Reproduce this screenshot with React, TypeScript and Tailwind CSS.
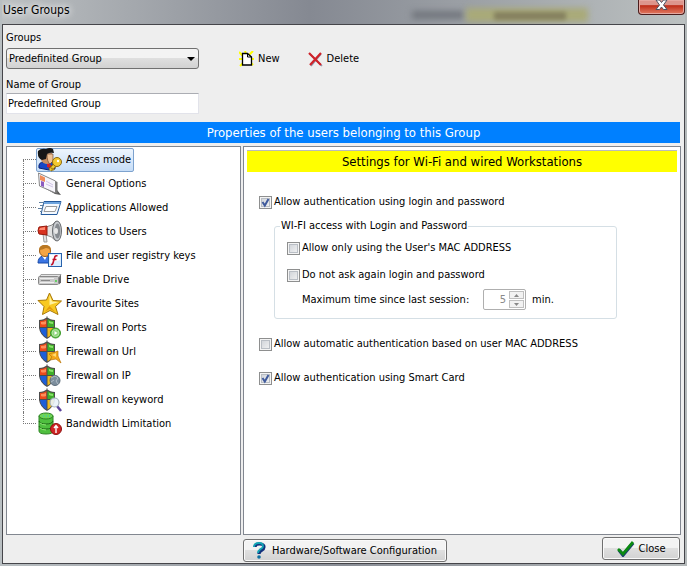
import React, { useState } from "react";

const UserIcon = () => (
  <svg width="26" height="24" viewBox="0 0 26 24">
    <path d="M2 20q-1-6 5-6h6q5 1 5 7l-6 1z" fill="#1747c8" stroke="#0b2270" />
    <path d="M10 14l4 3 2 4-6-2z" fill="#d3202a" />
    <path d="M3 6q0 9 6 10 5 0 6-4V5z" fill="#c98f63" />
    <path d="M10 6h6v7l-3 3q-3-2-3-10z" fill="#f0c294" stroke="#5e3b20" strokeWidth=".6" />
    <path d="M1 3q3-3 8-2 4-2 7 0l1 4q-4-1-7 1l-1 5-4 1Q0 10 1 3z" fill="#171717" />
    <path d="M19 16l-6 6" stroke="#7b5c08" strokeWidth="4.5" />
    <path d="M19 16l-6 6" stroke="#f0c930" strokeWidth="2.5" />
    <circle cx="20" cy="14" r="4.5" fill="#f3c92e" stroke="#8c6a10" />
    <circle cx="21" cy="13" r="1.2" fill="#fff" />
    <path d="M14 20l3 2" stroke="#b48b13" strokeWidth="2" />
  </svg>
);

const OptionsIcon = () => (
  <svg width="26" height="24" viewBox="0 0 26 24">
    <path d="M4 14l14 8 6 1-4-5z" fill="#555" />
    <path d="M1.500 1l17 8v12l-16-7z" fill="#f7f5fb" stroke="#888" />
    <path d="M18.500 9l2 1v12l-2-1z" fill="#777" />
    <path d="M3 3l5 2.500V10L3 8z" fill="#f18b5a" />
    <path d="M4 9l3 1v5l-3-1z" fill="#8c5bc0" />
    <path d="M9 9l7 4M9 12l7 3" stroke="#cfc2e6" />
  </svg>
);

const ApplicationIcon = () => (
  <svg width="26" height="24" viewBox="0 0 26 24">
    <path d="M7 5.500h17l-4 13H4z" fill="#f4f9ff" stroke="#245a9c" />
    <path d="M7.500 6h16l-.5 2H6.500z" fill="#6fa5de" />
    <path d="M9 10.500h11l-2 5H7z" fill="#fff" stroke="#9a9a9a" />
    <path d="M2 6.500h5M3 9.500h4M1 12.500h5M3 15.500h2" stroke="#5f7f9f" />
  </svg>
);

const MegaphoneIcon = () => (
  <svg width="26" height="24" viewBox="0 0 26 24">
    <path d="M6 14h3l1 8H7z" fill="#e4e4e4" stroke="#9a9a9a" />
    <path d="M9 7Q16 6 19 1v20q-4-5-10-6z" fill="#e2e2e2" stroke="#888" />
    <path d="M2 7l8-1v9l-8-1q-2-3 0-7z" fill="#d8321f" stroke="#94190c" />
    <path d="M3 8l5-1v3H2z" fill="#ff8b72" />
    <ellipse cx="20" cy="11" rx="4.500" ry="10" fill="#c9ccd0" stroke="#66696d" />
    <ellipse cx="20.500" cy="11" rx="2.800" ry="7.500" fill="#878b90" />
    <ellipse cx="19" cy="11" rx="2" ry="3" fill="#e7e7e7" />
  </svg>
);

const RegistryIcon = () => (
  <svg width="26" height="24" viewBox="0 0 26 24">
    <path d="M1 19q0-6 5-7h5q4 2 4 7z" fill="#3a75e4" stroke="#1748a6" />
    <path d="M5 12l3 4 2-4z" fill="#fff" />
    <circle cx="8" cy="7" r="5.500" fill="#f3a545" stroke="#9a5b15" />
    <path d="M2 6q0-5 6-5 6 0 6 5-3-2-5-2-4 2-7 2z" fill="#b97722" />
    <rect x="11.500" y="9.500" width="13" height="13" fill="#dbeeff" stroke="#2862ac" />
    <path d="M13 11h10v5l-10 3z" fill="#fff" />
    <path d="M20.500 12q-2.500-1-3 2l-1.500 5q-.5 2-2 1.500M15.500 15.500h4" fill="none" stroke="#c3122a" strokeWidth="1.600" />
  </svg>
);

const DriveIcon = () => (
  <svg width="26" height="24" viewBox="0 0 26 24">
    <path d="M4 6.500h20l-2 3H2z" fill="#e4e4e4" stroke="#a0a0a0" />
    <path d="M22 9.500l2-3v8l-2 2z" fill="#666" />
    <rect x="1.500" y="8.500" width="20" height="8" rx="1" fill="#c9c9c9" stroke="#888" />
    <path d="M3 10.500h14M3 14.500h14" stroke="#eee" />
    <path d="M4 12.500h9" stroke="#888" />
    <circle cx="19" cy="13" r="1" fill="#43d143" />
  </svg>
);

const StarIcon = () => (
  <svg width="26" height="24" viewBox="0 0 26 24">
    <path d="M12.500 1l3.500 7.500 8.500.5-6 5.500 2.500 8-8-4-7.500 4 1.500-8-6-6 8.500-.5z" fill="#f8c922" stroke="#a97808" strokeLinejoin="round" />
    <path d="M12.500 3l2.500 6.500 6.500.5-9 3z" fill="#fff1a0" />
    <path d="M12.500 14l6 6-6-3-5 3z" fill="#e59b0d" />
  </svg>
);

const ShieldIcon: React.FC<{ children: React.ReactNode }> = ({ children }) => (
  <svg width="26" height="24" viewBox="0 0 26 24">
    <path d="M2 4q5 0 8-3 3 3 8 3v8q-1 7-8 11Q3 19 2 12z" fill="#4c4c4c" />
    <path d="M3 5q4 0 6.500-2v8H3z" fill="#ec4a1c" />
    <path d="M10.500 3Q13 5 17 5v6h-6.500z" fill="#3fae2a" />
    <path d="M3 12h6.500v9.500Q3.500 18 3 12z" fill="#1e5fd8" />
    <path d="M10.500 12H17q-.5 6-6.500 9.500z" fill="#f0b91c" />
    <path d="M4 6q3 0 5-1v3q-3 1-5 0z" fill="#ff8f5a" />
    <path d="M12 5q2 1 4 1v2q-2 0-4-1z" fill="#8ce06c" />
    <path d="M10 0v2" stroke="#999" />
    {children}
  </svg>
);

const PortsIcon = () => (
  <ShieldIcon>
    <circle cx="18.500" cy="17" r="5" fill="#55bd3e" stroke="#3c9a2a" />
    <circle cx="18.500" cy="17" r="3.500" fill="#8fd67c" stroke="#b5e5a8" />
    <path d="M17.500 15l3 2-3 2z" fill="#fff" />
  </ShieldIcon>
);

const UrlIcon = () => (
  <ShieldIcon>
    <path d="M12 14l9-3v5l3 7-5-4-6 1 2-3z" fill="#f5a81c" stroke="#b97508" strokeWidth=".7" />
    <path d="M15 15l4-2v4z" fill="#ffdc70" />
  </ShieldIcon>
);

const IpIcon = () => (
  <ShieldIcon>
    <circle cx="18" cy="16.500" r="5" fill="#7c8e9d" stroke="#5c6c7a" />
    <path d="M14 14l4-2 3 2-2 3 2 3M14 18l3-2" fill="none" stroke="#b0bcc6" />
  </ShieldIcon>
);

const KeywordIcon = () => (
  <ShieldIcon>
    <path d="M20 18l4 5" stroke="#5b449b" strokeWidth="2.500" />
    <circle cx="17.500" cy="14.500" r="4.500" fill="#e9f3f9" fillOpacity=".9" stroke="#a3b1bb" strokeWidth="1.200" />
  </ShieldIcon>
);

const BandwidthIcon = () => (
  <svg width="26" height="24" viewBox="0 0 26 24">
    <path d="M2 4v15q0 3 7 3t7-3V4z" fill="#4fbf3f" stroke="#2c8423" />
    <ellipse cx="9" cy="4" rx="7" ry="3" fill="#6fd456" stroke="#2c8423" />
    <path d="M2 9q1 3 7 3t7-3M2 14q1 3 7 3t7-3" fill="none" stroke="#1f6818" />
    <path d="M3 11q2 2 6 2M3 16q2 2 6 2" fill="none" stroke="#8ee673" />
    <path d="M6 4h1M9 4h1M12 4h1" stroke="#26c8cf" />
    <circle cx="19" cy="17" r="5.500" fill="#cf2525" stroke="#8d1111" />
    <path d="M19 21v-7M17 16l2-2.500 2 2.500" fill="none" stroke="#fff" strokeWidth="1.400" />
  </svg>
);

const menuItems = [
  { label: "Access mode", Icon: UserIcon },
  { label: "General Options", Icon: OptionsIcon },
  { label: "Applications Allowed", Icon: ApplicationIcon },
  { label: "Notices to Users", Icon: MegaphoneIcon },
  { label: "File and user registry keys", Icon: RegistryIcon },
  { label: "Enable Drive", Icon: DriveIcon },
  { label: "Favourite Sites", Icon: StarIcon },
  { label: "Firewall on Ports", Icon: PortsIcon },
  { label: "Firewall on Url", Icon: UrlIcon },
  { label: "Firewall on IP", Icon: IpIcon },
  { label: "Firewall on keyword", Icon: KeywordIcon },
  { label: "Bandwidth Limitation", Icon: BandwidthIcon },
];

const buttonClass =
  "flex items-center justify-center rounded-[3px] border border-[#707070] bg-linear-to-b from-[#f3f3f3] from-45% via-[#dfdfdf] via-50% to-[#d2d2d2] shadow-[inset_0_0_0_1px_#fafafa]";

interface CheckProps {
  id: string;
  label: string;
  checked: boolean;
  onChange: (value: boolean) => void;
}

const Check: React.FC<CheckProps> = ({ id, label, checked, onChange }) => (
  <div className="flex items-center gap-[2px]">
    <span className="grid">
      <input
        id={id}
        type="checkbox"
        checked={checked}
        onChange={(e) => onChange(e.target.checked)}
        className="peer col-start-1 row-start-1 h-[13px] w-[13px] appearance-none border border-[#8e8f8f] bg-linear-to-br from-[#cbcfd5] to-[#f6f6f6] shadow-[inset_0_0_0_1px_#f4f4f4,inset_0_0_0_2px_#b9bec5]"
      />
      <svg viewBox="0 0 13 13" className="pointer-events-none invisible col-start-1 row-start-1 h-[13px] w-[13px] peer-checked:visible">
        <path d="M3.500 6l2.300 3.500L9.500 3" fill="none" stroke="#3f5a9c" strokeWidth="2" />
      </svg>
    </span>
    <label htmlFor={id}>{label}</label>
  </div>
);

const App: React.FC = () => {
  const [group, setGroup] = useState("Predefinited Group");
  const [groupName, setGroupName] = useState("Predefinited Group");
  const [selected, setSelected] = useState("Access mode");
  const [allowLogin, setAllowLogin] = useState(true);
  const [onlyMac, setOnlyMac] = useState(false);
  const [doNotAsk, setDoNotAsk] = useState(false);
  const [autoMac, setAutoMac] = useState(false);
  const [smartCard, setSmartCard] = useState(true);

  return (
    <div className="flex min-h-screen flex-col bg-linear-to-r from-[#b9bfc2] via-[#8a8e96] to-[#b4b9ba] px-[2px] pb-[2px] font-['DejaVu_Sans_Condensed','Noto_Sans',sans-serif] text-[11px] leading-4 text-black">
      <header className="relative flex h-6 items-start justify-between overflow-hidden bg-linear-to-r from-[#bcc0c2] via-[#858992] via-45% to-[#bcc1c1]">
        <div className="absolute top-[11px] left-[60%] h-2 w-[52px] bg-[#72767d] blur-[3px]" />
        <div className="absolute top-2 left-[68%] h-[14px] w-[122px] bg-[#a9aa78] blur-[3px]" />
        <div className="absolute top-3 left-[72%] h-2 w-[72px] bg-[#85805f] blur-[2px]" />
        <h1 className="relative pl-px text-[12px] leading-5 [text-shadow:0_0_6px_#fff,0_0_10px_#fff]">User Groups</h1>
        <button
          type="button"
          aria-label="Close window"
          className="relative flex h-[15px] w-[47px] items-start justify-center rounded-b-[4px] border border-t-0 border-[#4b1c1c] bg-linear-to-b from-[#dd958c] from-35% via-[#be2a16] via-40% to-[#e17a62] shadow-[inset_0_0_0_1px_#e5a8a0]"
        >
          <svg width="13" height="11" viewBox="0 0 13 11">
            <path d="M1 0h3.500l2 2.500L8.500 0H12L8.500 5l3.500 4.500H8.500l-2-2.500-2 2.500H1L4.500 5z" fill="#fff" stroke="#4d5261" />
          </svg>
        </button>
      </header>

      <main className="flex flex-1 flex-col border border-[#45454a] bg-[#eee] px-[3px] pt-[5px]">
        <div className="flex items-start">
          <div className="w-[193px]">
            <label htmlFor="groups" className="block">Groups</label>
            <div className="mt-[2px] grid items-center">
              <select
                id="groups"
                value={group}
                onChange={(e) => setGroup(e.target.value)}
                className="col-start-1 row-start-1 h-[21px] w-full appearance-none rounded-[3px] border border-[#707070] bg-linear-to-b from-[#f3f3f3] from-45% via-[#dfdfdf] via-50% to-[#d2d2d2] px-[2px]"
              >
                <option>Predefinited Group</option>
              </select>
              <svg width="8" height="4" viewBox="0 0 8 4" className="pointer-events-none col-start-1 row-start-1 mr-1 justify-self-end">
                <path d="M0 0h8L4 4z" />
              </svg>
            </div>
            <label htmlFor="group-name" className="mt-2 block">Name of Group</label>
            <input
              id="group-name"
              type="text"
              value={groupName}
              onChange={(e) => setGroupName(e.target.value)}
              className="h-[21px] w-full border border-[#e2e3ea] border-t-[#abadb3] bg-white px-px"
            />
          </div>
          <button type="button" className="mt-[21px] ml-10 flex items-center gap-1">
            <svg width="15" height="16" viewBox="0 0 15 16">
              <path d="M0 1l4 4M14 0l-4 4M0 8h3M15 8h-3M1 15l3-3M14 14l-3-3M6 0l1 3" stroke="#ff0" strokeWidth="2" />
              <path d="M3.500 2.500h5l4 3.500v8h-9z" fill="#fff" stroke="#000" strokeWidth="1.300" />
              <path d="M8.500 2.500V6h4" fill="none" stroke="#000" />
            </svg>
            New
          </button>
          <button type="button" className="mt-[21px] ml-7 flex items-center gap-1">
            <svg width="15" height="15" viewBox="0 0 15 15">
              <path d="M2 2l12 12M13 2L3 14" stroke="#8f96ad" strokeWidth="1.500" />
              <path d="M1 1l12 12M13 1L2 13" stroke="#cf2229" strokeWidth="2.200" />
            </svg>
            Delete
          </button>
        </div>

        <h2 className="mx-px mt-2 bg-[#0080ff] text-center text-[13px] leading-[21px] text-white">
          Properties of the users belonging to this Group
        </h2>

        <div className="mt-[3px] flex flex-1 gap-[2px]">
          <ul className="w-[235px] shrink-0 border border-[#828790] bg-white pt-px pl-4">
            {menuItems.map(({ label, Icon }, index) => (
              <li key={label} className="flex h-6 items-center">
                <span className="flex w-[13px] flex-col self-stretch">
                  <span className={`h-3 border-b border-dotted border-[#777] ${index > 0 ? "border-l" : ""}`} />
                  <span className={`h-3 border-dotted border-[#777] ${index < menuItems.length - 1 ? "border-l" : ""}`} />
                </span>
                <button
                  type="button"
                  onClick={() => setSelected(label)}
                  className={`flex h-6 items-center gap-[3px] rounded-[2px] border pr-[2px] ${
                    selected === label ? "border-[#7da2ce] bg-linear-to-b from-[#eef5fd] to-[#c6ddf7]" : "border-transparent"
                  }`}
                >
                  <Icon />
                  {label}
                </button>
              </li>
            ))}
          </ul>

          <section className="flex-1 border border-[#828790] bg-white p-[3px]">
            <h3 className="border-t border-[#bbb] bg-[#ff0] text-center text-[13px] leading-[21px]">
              Settings for Wi-Fi and wired Workstations
            </h3>
            <div className="pt-[22px] pl-3">
              <Check id="allow-login" label="Allow authentication using login and password" checked={allowLogin} onChange={setAllowLogin} />
              <fieldset className="mt-2 mr-[60px] ml-[15px] rounded-[3px] border border-[#d5dfe5] px-3 pb-2">
                <legend className="-ml-[7px] px-px">WI-FI access with Login and Password</legend>
                <div className="pt-[6px]">
                  <Check id="only-mac" label="Allow only using the User's MAC ADDRESS" checked={onlyMac} onChange={setOnlyMac} />
                </div>
                <div className="pt-[11px]">
                  <Check id="do-not-ask" label="Do not ask again login and password" checked={doNotAsk} onChange={setDoNotAsk} />
                </div>
                <div className="flex items-center pt-[6px] pl-[15px]">
                  <label htmlFor="max-time" className="w-[181px]">Maximum time since last session:</label>
                  <span className="flex h-[21px] w-[43px] rounded-[2px] border border-[#afafaf] bg-white p-px">
                    <input
                      id="max-time"
                      type="text"
                      defaultValue="5"
                      disabled
                      className="w-0 flex-1 pr-[3px] text-right text-[#8a8a8a]"
                    />
                    <span className="flex w-[15px] flex-col gap-px">
                      <button type="button" disabled aria-label="Increase" className="flex flex-1 items-center justify-center border border-[#bfbfbf] bg-[#f2f2f2]">
                        <svg width="5" height="3" viewBox="0 0 5 3"><path d="M0 3h5L2.500 0z" fill="#888" /></svg>
                      </button>
                      <button type="button" disabled aria-label="Decrease" className="flex flex-1 items-center justify-center border border-[#bfbfbf] bg-[#f2f2f2]">
                        <svg width="5" height="3" viewBox="0 0 5 3"><path d="M0 0h5L2.500 3z" fill="#888" /></svg>
                      </button>
                    </span>
                  </span>
                  <span className="ml-[6px]">min.</span>
                </div>
              </fieldset>
              <div className="pt-[17px]">
                <Check id="auto-mac" label="Allow automatic authentication based on user MAC ADDRESS" checked={autoMac} onChange={setAutoMac} />
              </div>
              <div className="pt-[18px]">
                <Check id="smart-card" label="Allow authentication using Smart Card" checked={smartCard} onChange={setSmartCard} />
              </div>
            </div>
          </section>
        </div>

        <footer className="mt-[2px] flex items-start pb-px pl-[237px]">
          <button type="button" className={`${buttonClass} mt-[2px] h-[23px] w-[204px] gap-[6px]`}>
            <svg width="13" height="17" viewBox="0 0 13 17">
              <path d="M2 5q0-3 4.500-3T11 5q0 2-2.500 3.500Q6 10 6 12" fill="none" stroke="#12307c" strokeWidth="3.200" />
              <path d="M1 5q0-4 5-4 4 0 4 3 0 2-2.500 3Q5 9 5 11" fill="none" stroke="#14a5b5" strokeWidth="1.800" />
              <circle cx="6" cy="15" r="1.800" fill="#0e6f9f" />
            </svg>
            Hardware/Software Configuration
          </button>
          <button type="button" className={`${buttonClass} ml-auto mr-px h-[23px] w-[78px] gap-1`}>
            <svg width="18" height="16" viewBox="0 0 18 16">
              <path d="M2 9l4 5L16 2" fill="none" stroke="#1c3c73" strokeWidth="3.500" />
              <path d="M1 8l5 5L16 1" fill="none" stroke="#0b8a12" strokeWidth="2.800" />
            </svg>
            Close
          </button>
        </footer>
      </main>
    </div>
  );
};

export default App;
